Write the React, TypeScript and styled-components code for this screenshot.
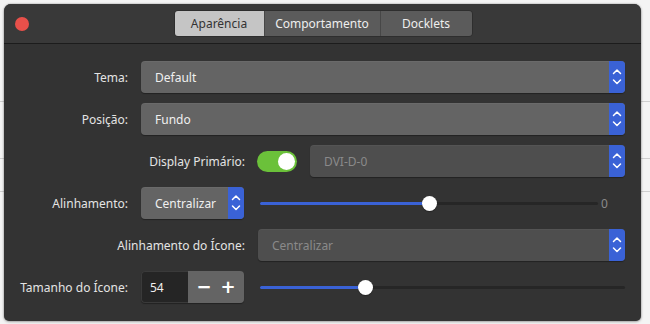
import React from "react";
import styled, { createGlobalStyle } from "styled-components";

const Global = createGlobalStyle`
  html, body { margin: 0; padding: 0; }
  body {
    background: #f4f4f4;
    font-family: "Noto Sans", "Open Sans", sans-serif;
    font-size: 12px;
  }
`;

const Page = styled.div`
  width: 650px;
  height: 324px;
  box-sizing: border-box;
  padding: 4px 9px 3px 4px;
  background-color: #f4f4f4;
  background-image:
    linear-gradient(#cfcfcf, #cfcfcf),
    linear-gradient(#cfcfcf, #cfcfcf),
    linear-gradient(#cfcfcf, #cfcfcf);
  background-repeat: no-repeat;
  background-size: 100% 1px, 100% 1px, 100% 1px;
  background-position: 0 101px, 0 158px, 0 191px;
`;

const Window = styled.div`
  height: 100%;
  background: #333333;
  border-radius: 7px 7px 5px 5px;
  box-shadow: 0 0 2px rgba(0, 0, 0, 0.35), 0 1px 3px rgba(0, 0, 0, 0.25);
  display: flex;
  flex-direction: column;
  overflow: hidden;
`;

const TitleBar = styled.div`
  position: relative;
  height: 39px;
  background: #393939;
  border-bottom: 1px solid #1c1c1c;
  display: flex;
  align-items: center;
  justify-content: center;
`;

const CloseDot = styled.span`
  position: absolute;
  left: 11px;
  top: 13px;
  width: 14px;
  height: 14px;
  border-radius: 50%;
  background: #e8504a;
`;

const Tabs = styled.div`
  display: flex;
  margin-top: -1px;
  margin-left: 1px;
  border-radius: 4px;
  overflow: hidden;
  border: 1px solid #2e2e2e;
`;

const Tab = styled.div<{ $active?: boolean; $w: number }>`
  width: ${(p) => p.$w}px;
  height: 25px;
  display: flex;
  align-items: center;
  justify-content: center;
  background: ${(p) => (p.$active ? "#c5c5c5" : "#5b5b5b")};
  color: ${(p) => (p.$active ? "#333" : "#eeeeee")};
  font-size: 12px;
  & + & {
    border-left: 1px solid #474747;
  }
`;

const Content = styled.div`
  flex: 1;
  display: flex;
  flex-direction: column;
  gap: 10px;
  padding: 17px 16px 0 0;
`;

const Row = styled.div`
  display: flex;
  align-items: center;
  height: 32px;
`;

const Label = styled.div<{ $w?: number; $mr?: number }>`
  width: ${(p) => p.$w ?? 124}px;
  flex: none;
  text-align: right;
  color: #e4e4e4;
  font-size: 12px;
  margin-right: ${(p) => p.$mr ?? 13}px;
  white-space: nowrap;
`;

const SelectBox = styled.div<{ $disabled?: boolean; $w?: number }>`
  height: 32px;
  ${(p) => (p.$w ? `width: ${p.$w}px; flex: none;` : "flex: 1;")}
  display: flex;
  border-radius: 4px;
  overflow: hidden;
  background: ${(p) => (p.$disabled ? "#4e4e4e" : "#646464")};
  box-shadow: 0 1px 1px rgba(0, 0, 0, 0.35), inset 0 1px 0 rgba(255, 255, 255, 0.04);
`;

const SelectText = styled.div<{ $disabled?: boolean }>`
  flex: 1;
  display: flex;
  align-items: center;
  padding-left: 14px;
  color: ${(p) => (p.$disabled ? "#8a8a8a" : "#f0f0f0")};
  font-size: 12px;
  white-space: nowrap;
`;

const Stepper = styled.div`
  width: 16px;
  flex: none;
  background: #3a62d6;
  display: flex;
  align-items: center;
  justify-content: center;
`;

const Chevrons = () => (
  <svg width="10" height="20" viewBox="0 0 10 20" fill="none" stroke="#fff" strokeWidth="1.5" strokeLinecap="round" strokeLinejoin="round">
    <polyline points="1.5,6.5 5,3 8.5,6.5" />
    <polyline points="1.5,13 5,16.5 8.5,13" />
  </svg>
);

const Select = ({ value, disabled, w }: { value: string; disabled?: boolean; w?: number }) => (
  <SelectBox $disabled={disabled} $w={w}>
    <SelectText $disabled={disabled}>{value}</SelectText>
    <Stepper>
      <Chevrons />
    </Stepper>
  </SelectBox>
);

const Switch = styled.div`
  width: 40px;
  height: 21px;
  flex: none;
  border-radius: 11px;
  background: #6bc13a;
  display: flex;
  align-items: center;
  justify-content: flex-end;
  padding-right: 2px;
  box-sizing: border-box;
  margin-right: 13px;
`;

const Knob = styled.span`
  width: 17px;
  height: 17px;
  border-radius: 50%;
  background: #ffffff;
`;

const SliderWrap = styled.div<{ $ml: number }>`
  flex: 1;
  margin-left: ${(p) => p.$ml}px;
  display: flex;
  align-items: center;
  gap: 3px;
`;

const Track = styled.div`
  position: relative;
  flex: 1;
  height: 3px;
  border-radius: 2px;
  background: #262626;
`;

const Fill = styled.div`
  position: absolute;
  left: 0;
  top: 0;
  height: 3px;
  border-radius: 2px;
  background: #3a62d6;
`;

const Thumb = styled.div`
  position: absolute;
  top: 50%;
  width: 15px;
  height: 15px;
  margin: -7.5px 0 0 -7.5px;
  border-radius: 50%;
  background: #ffffff;
  box-shadow: 0 1px 1px rgba(0, 0, 0, 0.3);
`;

const SliderValue = styled.span`
  color: #8a8a8a;
  font-size: 12px;
  width: 24px;
`;

const Slider = ({ pct, value, ml }: { pct: number; value?: string; ml: number }) => (
  <SliderWrap $ml={ml}>
    <Track>
      <Fill style={{ width: `${pct}%` }} />
      <Thumb style={{ left: `${pct}%` }} />
    </Track>
    {value !== undefined && <SliderValue>{value}</SliderValue>}
  </SliderWrap>
);

const Spin = styled.div`
  width: 103px;
  height: 32px;
  flex: none;
  display: flex;
  border-radius: 4px;
  overflow: hidden;
  box-shadow: 0 1px 1px rgba(0, 0, 0, 0.35);
`;

const SpinValue = styled.div`
  width: 47px;
  background: #252525;
  color: #f0f0f0;
  display: flex;
  align-items: center;
  padding-left: 8px;
  box-sizing: border-box;
  border: 1px solid #3a3a3a;
  border-right: none;
  border-radius: 4px 0 0 4px;
`;

const SpinButtons = styled.div`
  flex: 1;
  background: #646464;
  display: flex;
  align-items: center;
  justify-content: space-around;
  padding: 0 4px;
  color: #fff;
`;

const SpinBtn = styled.span`
  font-size: 18px;
  font-weight: bold;
  line-height: 1;
  font-family: "DejaVu Sans", sans-serif;
`;

export default function App() {
  return (
    <>
      <Global />
      <Page>
        <Window>
          <TitleBar>
            <CloseDot />
            <Tabs>
              <Tab $active $w={89}>Aparência</Tab>
              <Tab $w={115}>Comportamento</Tab>
              <Tab $w={91}>Docklets</Tab>
            </Tabs>
          </TitleBar>
          <Content>
            <Row>
              <Label>Tema:</Label>
              <Select value="Default" />
            </Row>
            <Row>
              <Label>Posição:</Label>
              <Select value="Fundo" />
            </Row>
            <Row>
              <Label $w={241} $mr={12}>Display Primário:</Label>
              <Switch>
                <Knob />
              </Switch>
              <Select value="DVI-D-0" disabled />
            </Row>
            <Row>
              <Label>Alinhamento:</Label>
              <Select value="Centralizar" w={103} />
              <Slider pct={50} value="0" ml={16} />
            </Row>
            <Row>
              <Label $w={241} $mr={13}>Alinhamento do Ícone:</Label>
              <Select value="Centralizar" disabled />
            </Row>
            <Row>
              <Label>Tamanho do Ícone:</Label>
              <Spin>
                <SpinValue>54</SpinValue>
                <SpinButtons>
                  <SpinBtn>−</SpinBtn>
                  <SpinBtn>+</SpinBtn>
                </SpinButtons>
              </Spin>
              <Slider pct={29} ml={16} />
            </Row>
          </Content>
        </Window>
      </Page>
    </>
  );
}
